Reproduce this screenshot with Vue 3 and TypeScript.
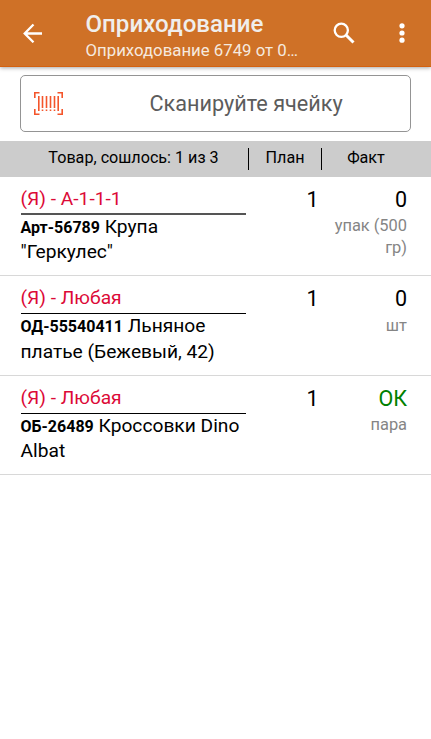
<script setup lang="ts">
interface Item {
  cell: string
  code: string
  name: string
  plan: number
  fact: string
  unit: string
  done?: boolean
  soft?: boolean
}

const items: Item[] = [
  { cell: '(Я) - А-1-1-1', code: 'Арт-56789', name: 'Крупа "Геркулес"', plan: 1, fact: '0', unit: 'упак (500 гр)', soft: true },
  { cell: '(Я) - Любая', code: 'ОД-55540411', name: 'Льняное платье (Бежевый, 42)', plan: 1, fact: '0', unit: 'шт' },
  { cell: '(Я) - Любая', code: 'ОБ-26489', name: 'Кроссовки Dino Albat', plan: 1, fact: 'ОК', unit: 'пара', done: true },
]
</script>

<template>
  <div class="screen">
    <header class="bar">
      <svg class="back" viewBox="0 0 20 20" width="20" height="20">
        <path d="M19 10.500H2M10.500 1.500L1.700 10.500l8.800 8.800" fill="none" stroke="#fff" stroke-width="2.300" />
      </svg>
      <div class="titles">
        <h1>Оприходование</h1>
        <p>Оприходование 6749 от 0…</p>
      </div>
      <svg class="search" viewBox="0 0 22 22" width="22" height="22">
        <circle cx="8.300" cy="8.300" r="6.600" fill="none" stroke="#fff" stroke-width="2.300" />
        <path d="M13 13l7.500 7.500" stroke="#fff" stroke-width="3" />
      </svg>
      <svg class="more" viewBox="0 0 6 20" width="6" height="20">
        <circle cx="3" cy="2.800" r="2.600" fill="#fff" />
        <circle cx="3" cy="10" r="2.600" fill="#fff" />
        <circle cx="3" cy="17.200" r="2.600" fill="#fff" />
      </svg>
    </header>

    <div class="scan">
      <svg class="barcode" viewBox="0 0 29 23" width="29" height="23">
        <path d="M5.500 .8H.8V6M.8 17v5.200H5.500M23.500 .8h4.700V6M28.200 17v5.200H23.500" fill="none" stroke="#f4552b" stroke-width="1.600" />
        <path d="M4.800 4v15M8.500 4v12M8.500 17.500V19M12.500 4v12M12.500 17.500V19M16.500 4v12M16.500 17.500V19M20.500 4v12M20.500 17.500V19M24.200 4v15" fill="none" stroke="#f4552b" stroke-width="1.600" />
      </svg>
      <span>Сканируйте ячейку</span>
    </div>

    <div class="head">
      <span class="h-item">Товар, сошлось: 1 из 3</span>
      <span class="h-plan">План</span>
      <span class="h-fact">Факт</span>
    </div>

    <div v-for="item in items" :key="item.code" class="row">
      <div class="goods">
        <div class="cell" :class="{ soft: item.soft }">{{ item.cell }}</div>
        <div class="name"><b>{{ item.code }}</b> {{ item.name }}</div>
      </div>
      <div class="plan">{{ item.plan }}</div>
      <div class="fact">
        <div class="qty" :class="{ done: item.done }">{{ item.fact }}</div>
        <div class="unit">{{ item.unit }}</div>
      </div>
    </div>
  </div>
</template>

<style>
body {
  background: #fff;
}
</style>

<style scoped>
.screen {
  width: 431px;
  height: 739px;
  overflow: hidden;
  background: #fff;
  font-family: Roboto, sans-serif;
  color: #000;
}
.bar {
  display: flex;
  height: 67px;
  box-sizing: border-box;
  border-bottom: 1px solid #d4610f;
  background: #cf7127;
  box-shadow: 0 1px 4px rgba(0, 0, 0, 0.35);
}
.back {
  margin: 23px 0 0 23px;
}
.titles {
  width: 216px;
  margin: 10px 0 0 42.500px;
  white-space: nowrap;
}
h1 {
  margin: 0;
  font-size: 24.100px;
  line-height: 28px;
  font-weight: 500;
  color: #f0eeec;
}
p {
  margin: 1px 0 0;
  font-size: 16.800px;
  line-height: 22px;
  color: #f5e9df;
}
.search {
  margin: 22px 0 0 31.500px;
}
.more {
  margin: 23px 0 0 44px;
}
.scan {
  display: flex;
  align-items: center;
  box-sizing: border-box;
  width: 391px;
  height: 57px;
  margin: 8px 0 9px 19.500px;
  padding-left: 13.500px;
  border: 1px solid #949494;
  border-radius: 5px;
  font-size: 21.650px;
  color: #5c5c5c;
}
.scan span {
  margin-left: 86.500px;
  white-space: nowrap;
}
.head {
  display: flex;
  align-items: center;
  height: 35.750px;
  background: #ccc;
  font-size: 16.150px;
}
.head span {
  height: 22px;
  line-height: 20px;
  text-align: center;
  box-sizing: border-box;
  white-space: nowrap;
}
.h-item {
  width: 249px;
  padding-left: 19px;
  border-right: 1px solid #000;
}
.h-plan {
  width: 73px;
  border-right: 1px solid #000;
}
.h-fact {
  width: 88px;
}
.row {
  display: flex;
  box-sizing: border-box;
  height: 99.500px;
  padding: 10px 24px 0 20.500px;
  border-bottom: 1px solid #d8d8d8;
}
.goods {
  width: 225px;
}
.cell {
  height: 28px;
  box-sizing: border-box;
  border-bottom: 1px solid #000;
  font-size: 19.200px;
  line-height: 24px;
  color: #dc0a37;
}
.cell.soft {
  border-bottom: 2px solid #555;
}
.name {
  font-size: 19.200px;
  line-height: 24.600px;
}
.name b {
  font-size: 16px;
}
.plan {
  width: 73px;
  text-align: right;
  font-size: 21.500px;
  line-height: 26px;
}
.fact {
  flex: 1;
  text-align: right;
}
.qty {
  font-size: 21.500px;
  line-height: 26px;
}
.qty.done {
  color: #008000;
}
.unit {
  margin-top: 2.500px;
  font-size: 16.400px;
  line-height: 22px;
  color: #858585;
}
</style>
